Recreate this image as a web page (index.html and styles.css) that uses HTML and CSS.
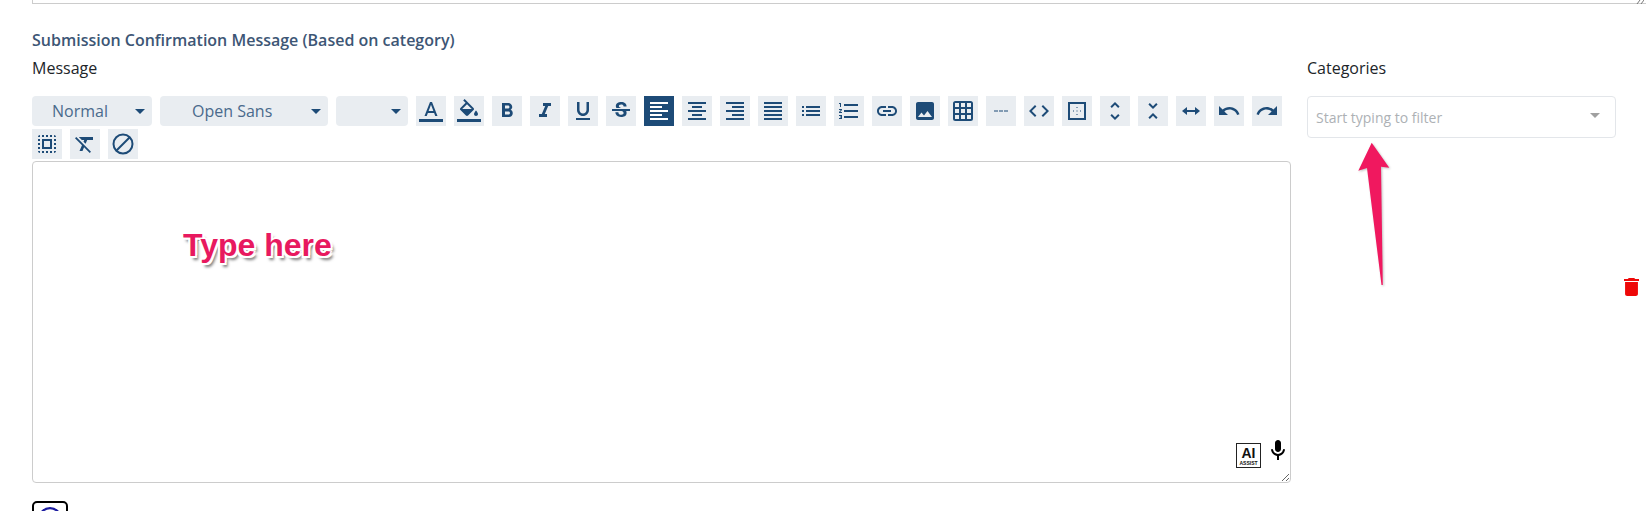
FILE: index.html
```html
<!DOCTYPE html>
<html lang="en">
<head>
  <meta charset="UTF-8" />
  <meta name="viewport" content="width=device-width, initial-scale=1.0" />
  <title>Submission Confirmation Message</title>
  <link rel="stylesheet" href="styles.css">
</head>
<body>

  <div class="prev-field">
    <svg class="prev-grip" viewBox="0 0 8 4"><path d="M1 4l3-4M5 4l3-4"/></svg>
  </div>

  <h3 class="section-title">Submission Confirmation Message (Based on category)</h3>

  <div class="message-row">
    <div class="message-col">
      <label class="field-label">Message</label>

      <div class="toolbar">
        <button class="tb-select tb-style"><span>Normal</span><i class="caret"></i></button>
        <button class="tb-select tb-font"><span>Open Sans</span><i class="caret"></i></button>
        <button class="tb-select tb-size"><span></span><i class="caret"></i></button>

        <button class="tb-btn"><svg viewBox="0 0 24 24"><path d="M0 20h24v3H0z"/><path d="M11 3L5.5 17h2.25l1.12-3h6.25l1.12 3h2.25L13 3h-2zm-1.38 9L12 5.67 14.38 12H9.62z"/></svg></button>
        <button class="tb-btn"><svg viewBox="0 0 24 24"><path d="M0 20h24v3H0z"/><path d="M16.56 8.94L7.62 0 6.21 1.41l2.38 2.38-5.15 5.15c-.59.59-.59 1.54 0 2.12l5.5 5.5c.29.29.68.44 1.06.44s.77-.15 1.06-.44l5.5-5.5c.59-.58.59-1.53 0-2.12zM5.21 10L10 5.21 14.79 10H5.21zM19 11.5s-2 2.17-2 3.5c0 1.1.9 2 2 2s2-.9 2-2c0-1.33-2-3.5-2-3.5z"/></svg></button>
        <button class="tb-btn"><svg viewBox="0 0 24 24"><path d="M15.6 10.79c.97-.67 1.65-1.77 1.65-2.79 0-2.26-1.75-4-4-4H7v14h7.04c2.09 0 3.71-1.7 3.71-3.79 0-1.52-.86-2.82-2.15-3.42zM10 6.5h3c.83 0 1.5.67 1.5 1.5s-.67 1.5-1.5 1.5h-3v-3zm3.5 9H10v-3h3.5c.83 0 1.5.67 1.5 1.5s-.67 1.5-1.5 1.5z"/></svg></button>
        <button class="tb-btn"><svg viewBox="0 0 24 24"><path d="M10 4v3h2.21l-3.42 8H6v3h8v-3h-2.21l3.42-8H18V4z"/></svg></button>
        <button class="tb-btn"><svg viewBox="0 0 24 24"><path d="M12 17c3.31 0 6-2.69 6-6V3h-2.5v8c0 1.93-1.57 3.5-3.5 3.5S8.5 12.93 8.5 11V3H6v8c0 3.31 2.69 6 6 6zm-7 2v2h14v-2H5z"/></svg></button>
        <button class="tb-btn"><svg viewBox="0 0 24 24"><path d="M6.85 7.08C6.85 4.37 9.45 3 12.24 3c1.64 0 3 .49 3.9 1.28.77.65 1.46 1.73 1.46 3.24h-3.01c0-.31-.05-.59-.15-.85-.29-.86-1.2-1.28-2.25-1.28-1.86 0-2.34 1.02-2.34 1.7 0 .48.25.88.74 1.21.38.25.77.48 1.41.7H7.39c-.21-.34-.54-.89-.54-1.92zM21 12v-2H3v2h9.62c1.15.45 1.96.75 1.96 1.97 0 1-.81 1.67-2.28 1.67-1.54 0-2.93-.54-2.93-2.51H6.4c0 .55.08 1.13.24 1.58.81 2.29 3.29 3.3 5.67 3.3 2.27 0 5.3-.89 5.3-4.05 0-.3-.01-1.16-.48-1.96H21V12z"/></svg></button>
        <button class="tb-btn active"><svg viewBox="0 0 24 24"><path d="M15 15H3v2h12v-2zm0-8H3v2h12V7zM3 13h18v-2H3v2zm0 8h18v-2H3v2zM3 3v2h18V3H3z"/></svg></button>
        <button class="tb-btn"><svg viewBox="0 0 24 24"><path d="M7 15v2h10v-2H7zm-4 6h18v-2H3v2zm0-8h18v-2H3v2zm4-6v2h10V7H7zM3 3v2h18V3H3z"/></svg></button>
        <button class="tb-btn"><svg viewBox="0 0 24 24"><path d="M3 21h18v-2H3v2zm6-4h12v-2H9v2zm-6-4h18v-2H3v2zm6-4h12V7H9v2zM3 3v2h18V3H3z"/></svg></button>
        <button class="tb-btn"><svg viewBox="0 0 24 24"><path d="M3 21h18v-2H3v2zm0-4h18v-2H3v2zm0-4h18v-2H3v2zm0-4h18V7H3v2zm0-6v2h18V3H3z"/></svg></button>
        <button class="tb-btn"><svg viewBox="0 0 24 24"><path d="M7 7h14v2H7zM7 11h14v2H7zM7 15h14v2H7zM3 7h2v2H3zM3 11h2v2H3zM3 15h2v2H3z"/></svg></button>
        <button class="tb-btn"><svg viewBox="0 0 24 24"><path d="M2 17h2v.5H3v1h1v.5H2v1h3v-4H2v1zm1-9h1V4H2v1h1v3zm-1 3h1.8L2 13.1v.9h3v-1H3.2L5 10.9V10H2v1zm5-6v2h14V5H7zm0 14h14v-2H7v2zm0-6h14v-2H7v2z"/></svg></button>
        <button class="tb-btn"><svg viewBox="0 0 24 24"><path d="M3.9 12c0-1.71 1.39-3.1 3.1-3.1h4V7H7c-2.76 0-5 2.24-5 5s2.24 5 5 5h4v-1.9H7c-1.71 0-3.1-1.39-3.1-3.1zM8 13h8v-2H8v2zm9-6h-4v1.9h4c1.71 0 3.1 1.39 3.1 3.1s-1.39 3.1-3.1 3.1h-4V17h4c2.76 0 5-2.24 5-5s-2.24-5-5-5z"/></svg></button>
        <button class="tb-btn"><svg viewBox="0 0 24 24"><path d="M21 19V5c0-1.1-.9-2-2-2H5c-1.1 0-2 .9-2 2v14c0 1.1.9 2 2 2h14c1.1 0 2-.9 2-2zM8.5 13.5l2.5 3.01L14.5 12l4.5 6H5l3.5-4.5z"/></svg></button>
        <button class="tb-btn"><svg viewBox="0 0 24 24"><path d="M4.5 2h15A2.5 2.5 0 0 1 22 4.500v15a2.500 2.500 0 0 1-2.500 2.500h-15A2.500 2.500 0 0 1 2 19.500v-15A2.500 2.500 0 0 1 4.500 2zM4 4v4h4V4zm6 0v4h4V4zm6 0v4h4V4zM4 10v4h4v-4zm6 0v4h4v-4zm6 0v4h4v-4zM4 16v4h4v-4zm6 0v4h4v-4zm6 0v4h4v-4z" fill-rule="evenodd"/></svg></button>
        <button class="tb-btn"><svg viewBox="0 0 24 24"><path d="M5 11.500h4v1H5zM10 11.500h4v1h-4zM15 11.500h4v1h-4z"/></svg></button>
        <button class="tb-btn"><svg viewBox="0 0 24 24"><path d="M9.400 16.600L4.800 12l4.600-4.600L8 6l-6 6 6 6 1.400-1.400zm5.200 0l4.600-4.600-4.600-4.600L16 6l6 6-6 6-1.400-1.400z"/></svg></button>
        <button class="tb-btn"><svg viewBox="0 0 24 24"><path d="M3 3h18v18H3zM5 5v14h14V5z" fill-rule="evenodd"/><path d="M11.500 8h1v1h-1zM11.500 11.500h1v1h-1zM11.500 15h1v1h-1zM8 11.500h1v1H8zM15 11.500h1v1h-1z"/></svg></button>
        <button class="tb-btn"><svg viewBox="0 0 24 24"><path d="M12 5.830L15.170 9l1.410-1.410L12 3 7.410 7.590 8.830 9 12 5.830zm0 12.340L8.830 15l-1.410 1.410L12 21l4.590-4.590L15.170 15 12 18.170z"/></svg></button>
        <button class="tb-btn"><svg viewBox="0 0 24 24"><path d="M7.410 18.590L8.830 20 12 16.830 15.170 20l1.410-1.410L12 14l-4.590 4.590zm9.180-13.180L15.170 4 12 7.170 8.830 4 7.410 5.410 12 10l4.590-4.590z"/></svg></button>
        <button class="tb-btn"><svg viewBox="0 0 24 24"><path d="M3 12l5-4v3h8V8l5 4-5 4v-3H8v3z"/></svg></button>
        <button class="tb-btn"><svg viewBox="0 0 24 24"><path d="M12.500 8c-2.650 0-5.050.99-6.900 2.600L2 7v9h9l-3.620-3.620c1.390-1.160 3.160-1.880 5.120-1.880 3.540 0 6.550 2.310 7.600 5.500l2.370-.78C21.080 11.030 17.150 8 12.500 8z"/></svg></button>
        <button class="tb-btn"><svg viewBox="0 0 24 24"><path d="M18.400 10.600C16.550 8.990 14.150 8 11.500 8c-4.650 0-8.580 3.030-9.960 7.220L3.900 16c1.050-3.190 4.050-5.500 7.600-5.500 1.950 0 3.730.72 5.120 1.880L13 16h9V7l-3.600 3.600z"/></svg></button>
        <button class="tb-btn"><svg viewBox="0 0 24 24"><path d="M3 5h2V3c-1.100 0-2 .9-2 2zm0 8h2v-2H3v2zm4 8h2v-2H7v2zM3 9h2V7H3v2zm10-6h-2v2h2V3zm6 0v2h2c0-1.100-.9-2-2-2zM5 21v-2H3c0 1.100.9 2 2 2zm-2-4h2v-2H3v2zM9 3H7v2h2V3zm2 18h2v-2h-2v2zm8-8h2v-2h-2v2zm0 8c1.100 0 2-.9 2-2h-2v2zm0-12h2V7h-2v2zm0 8h2v-2h-2v2zm-4 4h2v-2h-2v2zm0-16h2V3h-2v2zM7 17h10V7H7v10zm2-8h6v6H9V9z"/></svg></button>
        <button class="tb-btn"><svg viewBox="0 0 24 24"><path d="M3.270 5L2 6.270l6.970 6.970L6.500 19h3l1.570-3.660L16.730 21 18 19.730 3.550 5.270 3.270 5zM6 5v.18L8.820 8h2.400l-.72 1.680 2.100 2.100L14.210 8H20V5H6z"/></svg></button>
        <button class="tb-btn"><svg viewBox="0 0 24 24"><circle cx="12" cy="12" r="9.500" fill="none" stroke="#1d4b77" stroke-width="2"/><path d="M5.500 18.500l13-13" stroke="#1d4b77" stroke-width="2"/></svg></button>
      </div>

      <div class="editor">
        <div class="editor-tools">
          <div class="ai-btn"><b>AI</b><small>ASSIST</small></div>
          <svg class="mic" viewBox="0 0 24 24"><path d="M12 14c1.660 0 3-1.340 3-3V5c0-1.660-1.340-3-3-3S9 3.340 9 5v6c0 1.660 1.340 3 3 3zm5.910-3c-.49 0-.9.36-.98.85C16.520 14.200 14.470 16 12 16s-4.520-1.800-4.930-4.150c-.08-.49-.49-.85-.98-.85-.61 0-1.090.54-1 1.140.49 3 2.890 5.350 5.910 5.780V22h2v-4.080c3.020-.43 5.420-2.780 5.910-5.780.1-.6-.39-1.140-1-1.140z"/></svg>
        </div>
      </div>
    </div>

    <div class="category-col">
      <label class="field-label">Categories</label>
      <div class="filter-box">
        <span>Start typing to filter</span>
        <i class="caret caret-grey"></i>
      </div>
    </div>

    <div class="delete-col">
      <svg class="trash" viewBox="5 3 14 18" preserveAspectRatio="none"><path d="M6 19c0 1.100.9 2 2 2h8c1.100 0 2-.9 2-2V7H6v12zM19 4h-3.500l-1-1h-5l-1 1H5v2h14V4z"/></svg>
    </div>
  </div>

  <div class="info-btn">
    <svg viewBox="0 0 24 24"><circle cx="12" cy="12" r="10" fill="none" stroke="#1c1ca0" stroke-width="2"/><path d="M11 11h2v6h-2zM11 7h2v2h-2z" fill="#1c1ca0"/></svg>
  </div>

  <!-- annotations on top of the screenshot -->
  <div class="note-text">Type here</div>
  <svg class="note-arrow" viewBox="0 0 1650 511">
    <path d="M1371.700 142.700L1389.300 167.700 1381 166.700 1382.800 285 1381.500 285 1367 168 1358.300 170.700z"/>
  </svg>

</body>
</html>
```

FILE: styles.css
```css
* {
  box-sizing: border-box;
}

html, body {
  height: 511px;
  overflow: hidden;
}

body {
  font-family: "Open Sans", sans-serif;
  font-size: 16px;
  line-height: 24px;
  margin: 0;
  padding: 0 4px 0 32px;
  background: #fff;
  color: #212529;
  position: relative;
}

.prev-field {
  height: 4px;
  border-left: 1px solid #ccc;
  border-bottom: 1px solid #ccc;
  position: relative;
}

.prev-grip {
  position: absolute;
  right: 2px;
  top: 0;
  width: 8px;
  height: 4px;
  fill: none;
  stroke: #777;
}

.section-title {
  margin: 24px 0 4px;
  font-size: 16px;
  line-height: 24px;
  font-weight: 600;
  color: #3d5675;
}

.message-row {
  display: grid;
  grid-template-columns: 1259px 309px 15px;
  column-gap: 16px;
}

.field-label {
  display: block;
  margin-bottom: 16px;
}

.toolbar {
  display: flex;
  flex-wrap: wrap;
  gap: 3px 8px;
}

.tb-select {
  height: 30px;
  display: flex;
  align-items: center;
  border: none;
  border-radius: 4px;
  background: #e9edf1;
  color: #4a6a8c;
  font-family: inherit;
  font-size: 16px;
  padding: 0;
  position: relative;
}

.tb-style {
  width: 120px;
  padding-left: 20px;
}

.tb-font {
  width: 168px;
  padding-left: 32px;
}

.tb-size {
  width: 72px;
}

.caret {
  position: absolute;
  right: 7px;
  top: 13px;
  border-left: 5px solid transparent;
  border-right: 5px solid transparent;
  border-top: 5px solid #1d4b77;
}

.tb-btn {
  width: 30px;
  height: 30px;
  padding: 3px;
  border: none;
  background: #e9edf1;
  display: block;
}

.tb-btn svg {
  display: block;
  width: 24px;
  height: 24px;
  fill: #1d4b77;
}

.tb-btn.active {
  background: #1d4b77;
}

.tb-btn.active svg {
  fill: #fff;
}

.editor {
  height: 322px;
  margin-top: 2px;
  border: 1px solid #ccc;
  border-radius: 4px;
  background: #fff;
  position: relative;
  overflow: auto;
  resize: vertical;
}

.editor-tools {
  position: absolute;
  right: 4px;
  bottom: 14px;
  display: flex;
  align-items: flex-start;
  gap: 9px;
}

.ai-btn {
  width: 25px;
  height: 25px;
  border: 1px solid #222;
  background: #fff;
  color: #111;
  display: flex;
  flex-direction: column;
  align-items: center;
  font-family: "Liberation Sans", sans-serif;
}

.ai-btn b {
  font-size: 14px;
  line-height: 14px;
  margin-top: 2px;
}

.ai-btn small {
  font-size: 5px;
  line-height: 6px;
  font-weight: bold;
}

.mic {
  width: 24px;
  height: 24px;
  margin: -5px -4px 0 -4px;
  fill: #000;
}

.filter-box {
  height: 42px;
  border: 1px solid #e3e6ea;
  border-radius: 4px;
  padding: 9px 8px;
  font-size: 14px;
  color: #adb1b5;
  position: relative;
}

.caret-grey {
  right: 15px;
  top: 16px;
  border-top-color: #a0a0a0;
}

.delete-col {
  padding-top: 222px;
  margin-left: -8px;
}

.trash {
  display: block;
  width: 15px;
  height: 18px;
  fill: #ee0808;
}

.info-btn {
  width: 36px;
  height: 36px;
  margin-top: 18px;
  border: 2px solid #000;
  border-radius: 5px;
  padding: 3px;
}

.info-btn svg {
  display: block;
  width: 100%;
  height: 100%;
}

.note-text {
  position: absolute;
  left: 183px;
  top: 225px;
  font-family: "Liberation Sans", sans-serif;
  font-size: 32px;
  line-height: 40px;
  font-weight: bold;
  color: #e8195f;
  text-shadow: -2px -1px 0 #fff, 2px -1px 0 #fff, -2px 2px 0 #fff, 2px 2px 0 #fff, 0 -2px 0 #fff, 3px 4px 3px #777;
}

.note-arrow {
  position: absolute;
  left: 0;
  top: 0;
  width: 1650px;
  height: 511px;
  fill: #f0185f;
  pointer-events: none;
  filter: drop-shadow(1px 1px 1px rgba(0, 0, 0, 0.25));
}
```
